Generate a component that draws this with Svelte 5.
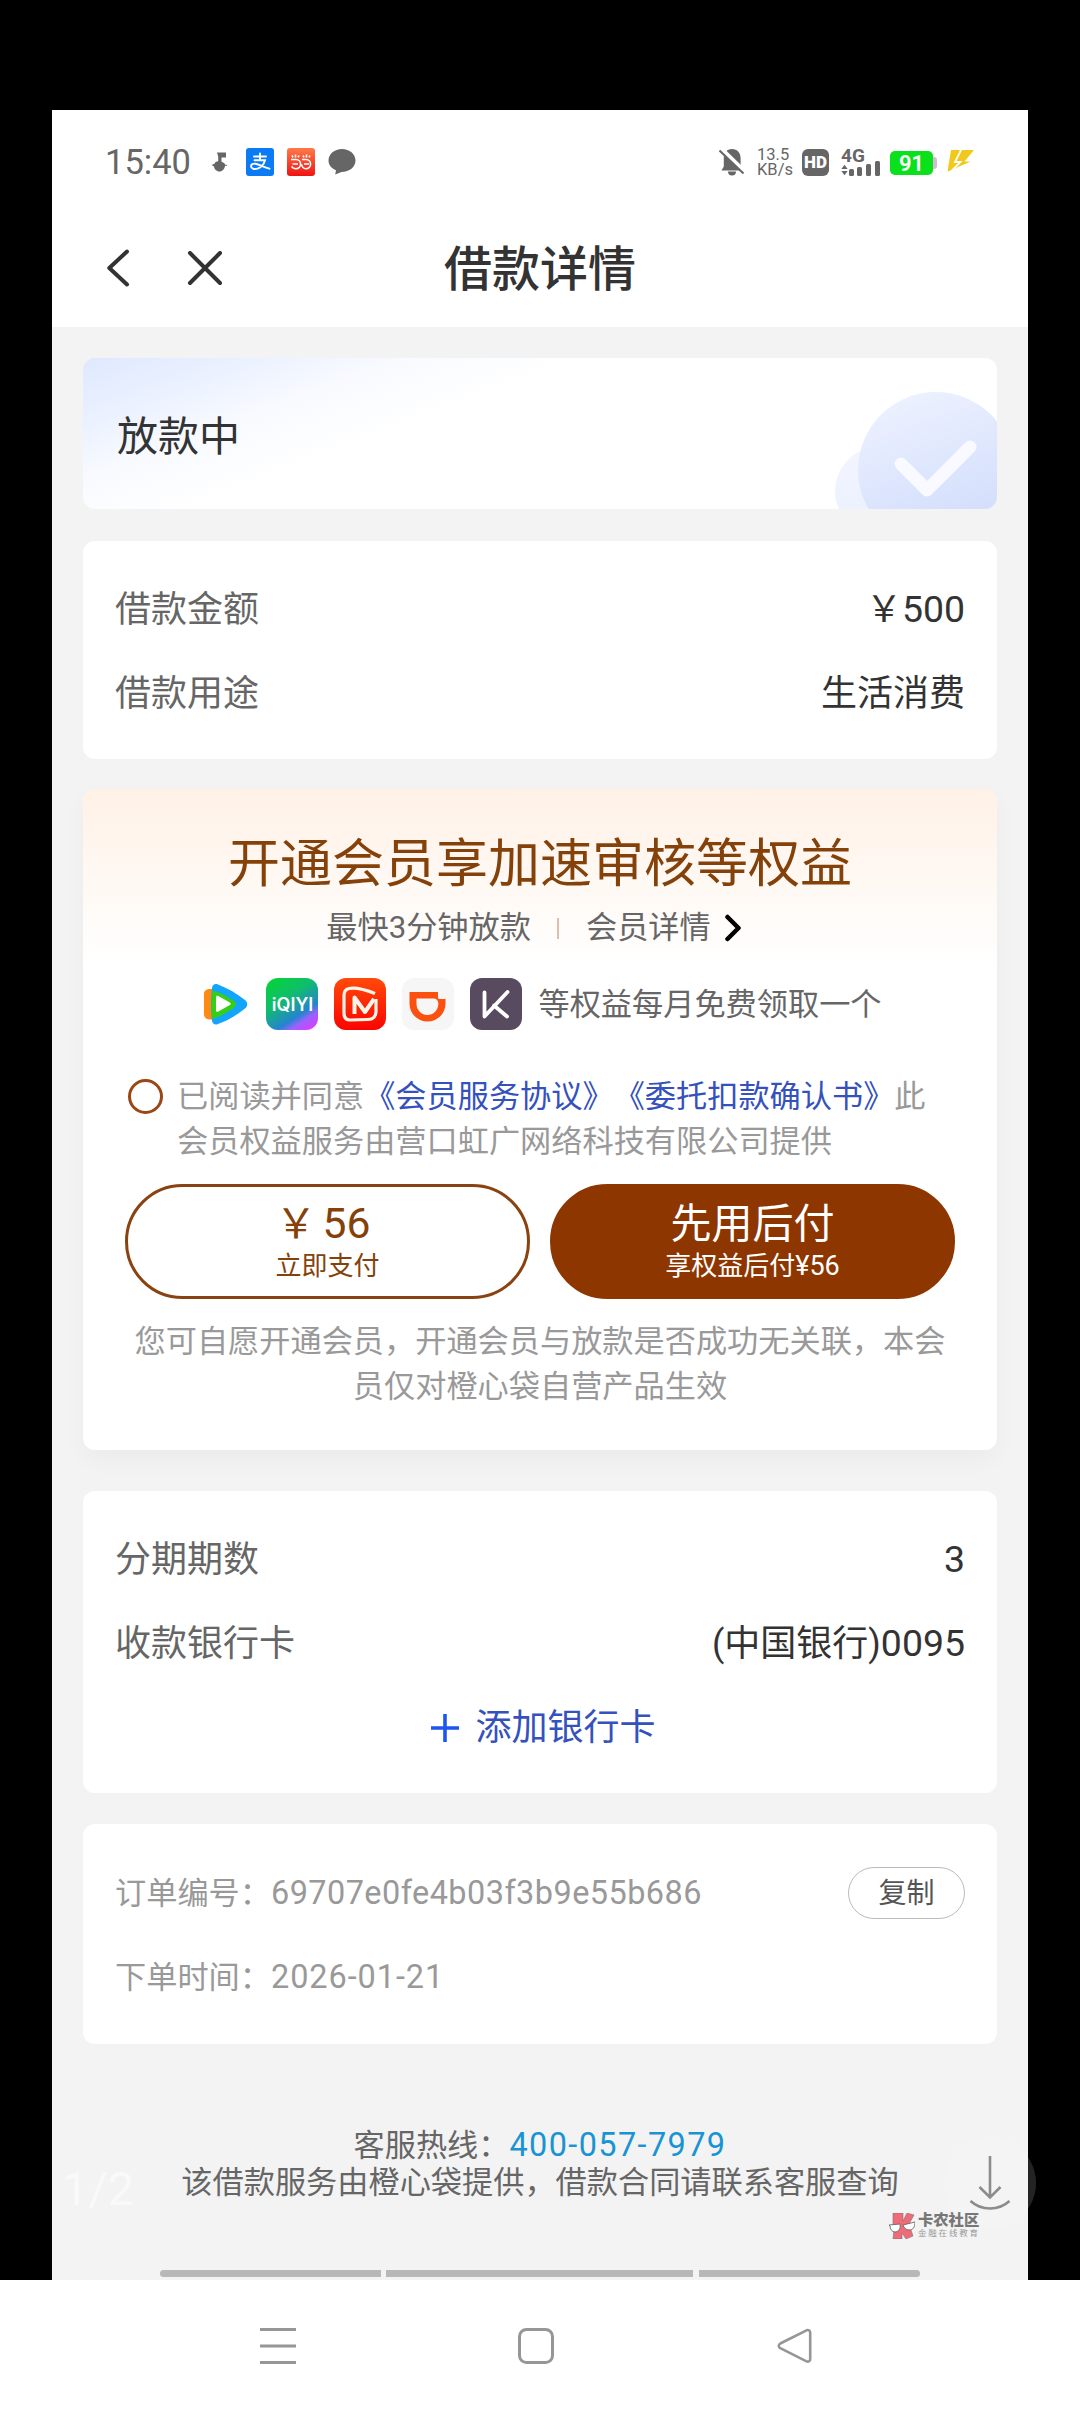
<script>
  let agreed = $state(false);

  const loanRows = [
    { label: '借款金额', value: '￥', digits: '500' },
    { label: '借款用途', value: '生活消费' },
  ];

  const repayRows = [
    { label: '分期期数', value: '', digits: '3' },
    { label: '收款银行卡', value: '(中国银行)', digits: '0095' },
  ];

  const orderNo = '69707e0fe4b03f3b9e55b686';
  const orderDate = '2026-01-21';

  // signal strength bars, in px
  const signal = [7, 9, 12, 15];

  function copyOrder() {
    navigator.clipboard?.writeText(orderNo);
  }
</script>

{#snippet infoRow(row)}
  <div class="row">
    <span class="label">{row.label}</span>
    <span class="value">{row.value}{#if row.digits}<span class="num">{row.digits}</span>{/if}</span>
  </div>
{/snippet}

<div class="viewer">
  <div class="phone">
    <header class="top">
      <div class="status-bar">
        <div class="status-left">
          <span class="time">15:40</span>
          <svg class="note" viewBox="0 0 18 20" width="18" height="20"><path d="M6 0.500h9v5h-4.500v4.200c2.600.8 3.600 2 3.600 3h2v1h-2c-.5 3-2.600 5.800-5.600 5.800s-5.300-2.500-5.500-5L0.500 13l3-1.300C4.300 9.900 5.600 9.300 7.200 9.200V4.500z" fill="#666" /></svg>
          <svg class="app-alipay" viewBox="0 0 28 28" width="28" height="28">
            <rect width="28" height="28" rx="3" fill="#0a7af5" />
            <g fill="none" stroke="#fff" stroke-width="1.900" stroke-linecap="round">
              <path d="M8 8.500h12M14 5.500v6.500M8.500 12.300h10.500c-1 3.500-3.500 7.200-7.500 8.300-3 .8-6.500.3-6.500-2.300 0-2 2-3 4.500-2.600 4 .7 8 3.500 14 5" />
            </g>
          </svg>
          <svg class="app-dd" viewBox="0 0 28 28" width="28" height="28">
            <defs><linearGradient id="dd" x1="0" y1="0" x2="0" y2="1"><stop offset="0" stop-color="#ff7a48" /><stop offset="1" stop-color="#ee1414" /></linearGradient></defs>
            <rect width="28" height="28" rx="3" fill="url(#dd)" />
            <g fill="none" stroke="#fff" stroke-width="1.600">
              <path d="M4 11.500h5a4.600 4.600 0 0 1 0 9.200c-2 0-3.600-.8-4.300-2.300M5.500 16h5.500" />
              <path d="M15 11.500h4a4.600 4.600 0 0 1 0 9.200c-2.500 0-4.300-1.600-4.300-4.400M17 16h5" />
              <path d="M5 7.500l1 1.800M8.500 6.500v3M12 7.500l-1 1.800M16 7.500l1 1.800M19.500 6.500v3M23 7.500l-1 1.800" />
            </g>
          </svg>
          <svg viewBox="0 0 28 28" width="28" height="28"><path d="M14 1C6.500 1 .5 6 .5 12.500c0 4.200 2.800 7.800 7.500 9.800l-.8 4.200 6.300-2.600c8 0 14-4.900 14-11.400S21.500 1 14 1z" fill="#666" /></svg>
        </div>
        <div class="status-right">
          <svg viewBox="0 0 26 28" width="26" height="28">
            <path d="M13 1c5.500 0 8.600 4 8.600 9v8.300l2.600 4.200H2.500l2.300-4V10C4.800 5 7.500 1 13 1z" fill="#666" />
            <path d="M9 23.500h8a4 4 0 0 1-8 0z" fill="#666" />
            <path d="M1 0l25 24.500" stroke="#fff" stroke-width="5" />
            <path d="M0.500 2.500l24 23" stroke="#666" stroke-width="2" />
          </svg>
          <span class="speed"><span>13.5</span><span>KB/s</span></span>
          <span class="hd">HD</span>
          <span class="network">
            <b>4G</b>
            <span class="signal">
              <svg viewBox="0 0 8 12" width="7" height="12"><path d="M4 0l3.600 4.800H.4zM4 12l3.600-4.800H.4z" fill="#666" /></svg>
              {#each signal as h}
                <i style="height:{h}px"></i>
              {/each}
            </span>
          </span>
          <span class="battery">91</span>
          <svg class="bolt" viewBox="0 0 28 24" width="28" height="24"><path d="M4 1h23L17.500 12.500h6L0.500 22.800z" fill="#f3c81c" /><path d="M14.500 0L8 13h5.500L5 21.500" fill="none" stroke="#fff" stroke-width="1.800" /></svg>
        </div>
      </div>

      <nav class="title-bar">
        <button type="button" class="icon-btn" aria-label="返回">
          <svg viewBox="0 0 24 40" width="24" height="40"><path d="M21 2.500L3.300 19 21 35.500" fill="none" stroke="#333" stroke-width="4" stroke-linecap="round" stroke-linejoin="round" /></svg>
        </button>
        <button type="button" class="icon-btn" aria-label="关闭">
          <svg viewBox="0 0 36 36" width="36" height="36"><path d="M3 2l30 30M33 2L3 32" fill="none" stroke="#333" stroke-width="4" stroke-linecap="round" /></svg>
        </button>
        <h1>借款详情</h1>
      </nav>
    </header>

    <main>
      <section class="card state">
        <span>放款中</span>
        <svg viewBox="0 0 164 118" width="164" height="118">
          <defs>
            <linearGradient id="disc" x1="0.200" y1="0" x2="0.500" y2="0.850"><stop offset="0" stop-color="#eef2ff" /><stop offset="1" stop-color="#d4dffc" /></linearGradient>
            <linearGradient id="disc-soft" x1="0" y1="0" x2="0" y2="1"><stop offset="0" stop-color="#f3f5ff" /><stop offset="1" stop-color="#eaf0ff" /></linearGradient>
          </defs>
          <circle cx="46" cy="100" r="44" fill="url(#disc-soft)" />
          <circle cx="103" cy="79" r="78" fill="url(#disc)" />
          <path d="M68 73l26 26 43-43" fill="none" stroke="#f8faff" stroke-width="13" stroke-linecap="round" stroke-linejoin="round" />
        </svg>
      </section>

      <section class="card rows loan">
        {#each loanRows as row}
          {@render infoRow(row)}
        {/each}
      </section>

      <section class="card member">
        <h2>开通会员享加速审核等权益</h2>
        <div class="sub">
          <span>最快3分钟放款</span>
          <i class="divider"></i>
          <span>会员详情</span>
          <svg viewBox="0 0 18 28" width="18" height="28"><path d="M3.500 3l11 11-11 11" fill="none" stroke="#000" stroke-width="4.500" stroke-linecap="round" stroke-linejoin="round" /></svg>
        </div>

        <div class="perks">
          <!-- Tencent Video -->
          <svg viewBox="0 0 52 52" width="52" height="52">
            <path d="M14 11c-5-.5-8 1-8 5v20c0 4 3 6 8 5.500z" fill="#ff8a12" />
            <path d="M14 10c0-3 3-5 6-3.500 10 4 19 9 27 15.500 3 2.500 3 6 0 8.500-8 6.500-17 12-27 15.500-3 1.500-6-.5-6-3.500-1.300-11-1.300-22 0-32.500z" fill="#12a5fb" />
            <path d="M14.500 12.500c9 2.500 16 6.500 22 11 2 1.700 2 3.700 0 5.500-6 5-13 9-22 12-1.500-9-1.500-19 0-28.500z" fill="#35cf16" />
            <path d="M18 19.500c0-1.500 1-2 2.300-1.400l11.500 6.300c1.200.8 1.200 2 0 2.700l-11.500 6.500c-1.300.6-2.300.1-2.300-1.300z" fill="#fff" />
          </svg>
          <!-- iQIYI -->
          <svg viewBox="0 0 52 52" width="52" height="52">
            <defs><linearGradient id="iq" x1="0.200" y1="0" x2="0.850" y2="1"><stop offset="0" stop-color="#05d23c" /><stop offset="0.350" stop-color="#10bd6c" /><stop offset="0.700" stop-color="#2484cf" /><stop offset="0.820" stop-color="#9a62ff" /><stop offset="1" stop-color="#dc3cff" /></linearGradient></defs>
            <rect width="52" height="52" rx="12" fill="url(#iq)" />
            <text x="26.500" y="33" text-anchor="middle" class="iq-text">iQIYI</text>
          </svg>
          <!-- Mango TV -->
          <svg viewBox="0 0 52 52" width="52" height="52">
            <defs><linearGradient id="mg" x1="0" y1="0" x2="0" y2="1"><stop offset="0" stop-color="#ff4a0a" /><stop offset="1" stop-color="#fb0400" /></linearGradient></defs>
            <rect width="52" height="52" rx="12" fill="url(#mg)" />
            <g fill="none" stroke="#fff4e8" stroke-width="3.200" stroke-linejoin="round">
              <path d="M41 15.500C31 11.500 22 9 15 10.500c-3 .7-5 3-5 7v18c0 4 2 6.500 6 6.500l18-.5c5 0 8-3 8-8V21" />
              <path d="M20.500 36V19.500l10.500 14.500 9-13" stroke-width="4" />
            </g>
          </svg>
          <!-- DiDi -->
          <svg viewBox="0 0 52 52" width="52" height="52">
            <rect width="52" height="52" rx="12" fill="#f6f6f6" />
            <path d="M7.500 14h29v6h7v5.500a18 18 0 0 1-36 0z" fill="#fb5010" />
            <path d="M36.500 14v6.500h7" fill="none" stroke="#f6f6f6" stroke-width="1" />
            <path d="M14.500 20.500h16.500c3.500 0 5.500 2 5.300 5.500a10.800 10.800 0 0 1-21.800 0z" fill="#f6f6f6" />
          </svg>
          <!-- Keep -->
          <svg viewBox="0 0 52 52" width="52" height="52">
            <rect width="52" height="52" rx="12" fill="#584a5f" />
            <path d="M14.500 14.500v24L37.500 14M24 27.500l13 11" fill="none" stroke="#fff" stroke-width="3.800" stroke-linecap="round" stroke-linejoin="round" />
          </svg>
          <span>等权益每月免费领取一个</span>
        </div>

        <div class="agreement">
          <button type="button" class="radio" class:checked={agreed} aria-label="同意协议" onclick={() => agreed = !agreed}></button>
          <p>已阅读并同意<a href="#service">《会员服务协议》</a><a href="#deduct">《委托扣款确认书》</a>此<br />会员权益服务由营口虹广网络科技有限公司提供</p>
        </div>

        <div class="actions">
          <button type="button" class="pay outline"><strong>￥<span class="num">56</span></strong><small>立即支付</small></button>
          <button type="button" class="pay solid"><strong>先用后付</strong><small>享权益后付<span class="num">¥56</span></small></button>
        </div>

        <p class="notice">您可自愿开通会员，开通会员与放款是否成功无关联，本会<br />员仅对橙心袋自营产品生效</p>
      </section>

      <section class="card rows bank">
        {#each repayRows as row}
          {@render infoRow(row)}
        {/each}
        <button type="button" class="add-card">
          <svg viewBox="0 0 28 28" width="28" height="28"><path d="M14 0v28M0 14h28" stroke="#1f55ee" stroke-width="3.600" /></svg>
          添加银行卡
        </button>
      </section>

      <section class="card rows order">
        <div class="row">
          <span>订单编号：<span class="num order-no">{orderNo}</span></span>
          <button type="button" class="copy" onclick={copyOrder}>复制</button>
        </div>
        <div class="row"><span>下单时间：<span class="num order-date">{orderDate}</span></span></div>
      </section>
    </main>

    <footer>
      <p>客服热线：<a class="num" href="tel:400-057-7979">400-057-7979</a></p>
      <p>该借款服务由橙心袋提供，借款合同请联系客服查询</p>
    </footer>

    <div class="gesture-bar"><i></i><i></i><i></i></div>
  </div>

  <div class="system-nav">
    <svg viewBox="0 0 36 36" width="36" height="36"><path d="M0 1.500h36M0 18h36M0 34.500h36" stroke="#969696" stroke-width="3" /></svg>
    <svg viewBox="0 0 36 36" width="36" height="36"><rect x="1.500" y="1.500" width="33" height="33" rx="7" fill="none" stroke="#969696" stroke-width="3" /></svg>
    <svg viewBox="0 0 36 36" width="36" height="36"><path d="M30.500 2.300L4.300 15.500c-2 1.200-2 3.600 0 4.700l26.200 13.200c2 .8 3.700-.4 3.700-2.400V4.700c0-2-1.700-3.200-3.700-2.400z" fill="none" stroke="#969696" stroke-width="2.600" /></svg>
  </div>

  <!-- image viewer overlays -->
  <span class="counter">1/2</span>
  <button type="button" class="download" aria-label="下载">
    <svg viewBox="0 0 42 56" width="42" height="56"><path d="M21 1v41M10.500 32L21 42.500 31.500 32M1.500 46c11 10 28 10 39 0" fill="none" stroke="#8c8c8c" stroke-width="2.600" /></svg>
  </button>
  <div class="watermark">
    <svg viewBox="0 0 26 26" width="26" height="26">
      <path d="M4 0h10v8l4-8 7 2-5 9 4 12-7 3-4-6v6H4l1-9-3-3 2-2z" fill="#ef6b78" stroke="#777" stroke-width="0.600" />
      <path d="M0 12l11-1c1 5-2 8-5 8s-5-3-5-6zM14 12l12-3c0 5-2 8-6 8-3 0-5-2-6-5z" fill="#fff" stroke="#666" stroke-width="0.900" />
    </svg>
    <div><b>卡农社区</b><span>金融在线教育</span></div>
  </div>
</div>

<style>
  :global(body) { background: #000; }

  .viewer {
    position: relative; box-sizing: border-box; width: 1080px; height: 2412px;
    padding-top: 110px; background: #000; overflow: hidden;
    font-family: Roboto, 'Noto Sans CJK SC', sans-serif; line-height: 1.3; color: #333;
    text-spacing-trim: space-all;
  }
  .viewer * { box-sizing: border-box; }
  button { padding: 0; border: none; background: none; font: inherit; color: inherit; cursor: pointer; }
  a { text-decoration: none; }
  h1, h2, p { margin: 0; font-weight: 400; }
  svg { display: block; flex-shrink: 0; }
  .num { font-size: 1.04em; line-height: 1; }

  .phone {
    display: flex; flex-direction: column;
    width: 976px; height: 2170px; margin: 0 auto; background: #f3f3f3;
  }

  /* Status bar */
  .top { height: 217px; background: #fff; }
  .status-bar {
    display: flex; justify-content: space-between; align-items: center;
    height: 104px; padding: 0 53px 0 53px; color: #666;
  }
  .status-left, .status-right { display: flex; align-items: center; }
  .time { width: 106px; font-size: 34.5px; line-height: 40px; }
  .note { margin-right: 17px; }
  .app-alipay, .app-dd { margin-right: 13px; }
  .speed {
    display: flex; flex-direction: column; width: 34px; margin: 0 11px 0 12px;
    font-size: 16.5px; line-height: 15px;
  }
  .hd {
    width: 27px; height: 27px; margin-right: 12px; border-radius: 6px; background: #666;
    color: #fff; font-size: 17px; line-height: 27px; font-weight: 900; text-align: center;
  }
  .network { display: flex; flex-direction: column; width: 39px; height: 27px; margin-right: 10px; }
  .network b { font-size: 19px; line-height: 14px; height: 12px; }
  .signal { display: flex; align-items: flex-end; gap: 3.7px; height: 15px; }
  .signal svg { margin-right: -3px; }
  .signal i { width: 5px; border-radius: 1.5px; background: #666; }
  .battery {
    position: relative; width: 43px; height: 24px; margin: 2px 14px 0 0; border-radius: 5px; background: #0be01c;
    color: #fff; font-size: 22px; line-height: 25px; font-weight: 600; text-align: center;
  }
  .battery::after {
    content: ''; position: absolute; right: -4px; top: 6px; width: 4px; height: 12px;
    border-radius: 0 3px 3px 0; background: #cdbfd0;
  }
  .bolt { margin-bottom: 2px; }

  .title-bar { display: grid; grid-template-columns: 24px 93px 1fr; align-items: center; height: 110px; padding-left: 54px; }
  .icon-btn + .icon-btn { margin-left: 57px; }
  h1 { margin: 2px 171px 0 0; text-align: center; font-size: 48px; line-height: 60px; font-weight: 500; }

  /* Cards */
  main { display: flex; flex-direction: column; padding: 31px 31px 0; }
  .card { margin-bottom: 31px; border-radius: 12px; background: #fff; overflow: hidden; }
  .state {
    display: flex; justify-content: space-between; align-items: center;
    height: 151px; margin-bottom: 32px; padding-left: 34px; font-size: 41px;
    background: linear-gradient(159deg, #dfe8ff 0, #e9f0ff 55px, #f8faff 115px, #fff 180px);
  }
  .state span { padding-top: 8px; }
  .state svg { align-self: flex-end; }
  .rows { height: 218px; padding: 27px 32px 0; font-size: 36px; }
  .loan { margin-bottom: 30px; }
  .row { display: flex; justify-content: space-between; align-items: center; height: 84px; }
  .label { color: #666; }

  .member {
    display: flex; flex-direction: column; align-items: center;
    height: 661px; margin-bottom: 41px;
    background: linear-gradient(#fff1e6, #fff 175px);
    box-shadow: 0 10px 24px rgba(0, 0, 0, 0.035);
  }
  h2 { margin-top: 41px; font-size: 52px; line-height: 70px; color: #84420a; }
  .sub { display: flex; align-items: center; height: 56px; padding-right: 12px; font-size: 31.2px; color: #666; }
  .divider { width: 2px; height: 21px; margin: 0 27px 0 26px; background: #dcc0ae; }
  .sub svg { margin-left: 13px; }
  .perks { display: flex; align-items: center; gap: 16px; height: 52px; margin-top: 22px; font-size: 31.2px; color: #666; }
  .perks span { padding-top: 2px; }
  .iq-text { font: 600 18px Inter, sans-serif; fill: #fff; }
  .agreement {
    display: flex; align-self: stretch; margin: 45px 0 0 44px;
    font-size: 31.2px; line-height: 44.5px; color: #999;
  }
  .agreement p { white-space: nowrap; }
  .agreement a { color: #3451bd; }
  .radio { width: 35px; height: 35px; margin: 4px 14px 0 1px; border: 3px solid #9a4716; border-radius: 50%; }
  .radio.checked { background: #8e3600; }
  .actions { display: flex; gap: 20px; margin-top: 20px; }
  .pay {
    display: flex; flex-direction: column; align-items: center; justify-content: center;
    width: 405px; height: 115px; padding-top: 2px; border: 3px solid #8a4310; border-radius: 58px; color: #84420a;
  }
  .pay strong { font-size: 41px; line-height: 46px; font-weight: 400; }
  .outline strong { padding-right: 9px; }
  .pay strong .num { margin-left: 6px; }
  .pay small { font-size: 26px; line-height: 38px; }
  .pay.solid { border-color: #8e3600; background: #8e3600; color: #fff; }
  .notice { margin-top: 21px; text-align: center; font-size: 31.2px; line-height: 44.5px; color: #999; }

  .bank { height: 302px; }
  .add-card { display: flex; align-items: center; justify-content: center; gap: 16px; width: 100%; height: 84px; padding-left: 7px; color: #3451bd; }

  .order { height: 220px; margin-bottom: 0; font-size: 31.2px; color: #999; }
  .order .row > span { padding-top: 3px; }
  .order-no { letter-spacing: 0.45px; }
  .order-date { letter-spacing: 0.95px; }
  .copy { width: 117px; height: 52px; padding-top: 2px; border: 1px solid #bbb; border-radius: 26px; font-size: 28px; color: #555; }

  footer { margin-top: 84px; text-align: center; font-size: 31.2px; line-height: 36.5px; color: #666; }
  footer a { color: #1a93d4; letter-spacing: 1.4px; }
  .gesture-bar { display: grid; grid-template-columns: 221px 307px 221px; gap: 5.5px; justify-content: center; margin-top: auto; padding: 0 1px 3px 0; }
  .gesture-bar i { height: 7px; background: #b8b8b8; }
  .gesture-bar i:first-child { border-radius: 4px 0 0 4px; }
  .gesture-bar i:last-child { border-radius: 0 4px 4px 0; }

  .system-nav { display: flex; justify-content: space-between; align-items: center; height: 132px; padding: 0 268px 0 260px; background: #fff; }

  /* Overlays */
  .counter { position: absolute; left: 62px; top: 2161px; font-size: 47px; line-height: 56px; color: #f9f9f9; }
  .download {
    position: absolute; left: 944px; top: 2137px; display: flex; justify-content: center; align-items: center;
    width: 92px; height: 92px; border-radius: 50%; background: rgba(255, 255, 255, 0.14);
  }
  .watermark { position: absolute; left: 889px; top: 2213px; display: flex; gap: 3px; }
  .watermark div { display: flex; flex-direction: column; }
  .watermark b { font-size: 15.3px; line-height: 15px; font-weight: 900; color: #777; }
  .watermark span { font-size: 8.5px; line-height: 11px; letter-spacing: 1.8px; color: #999; }
</style>
